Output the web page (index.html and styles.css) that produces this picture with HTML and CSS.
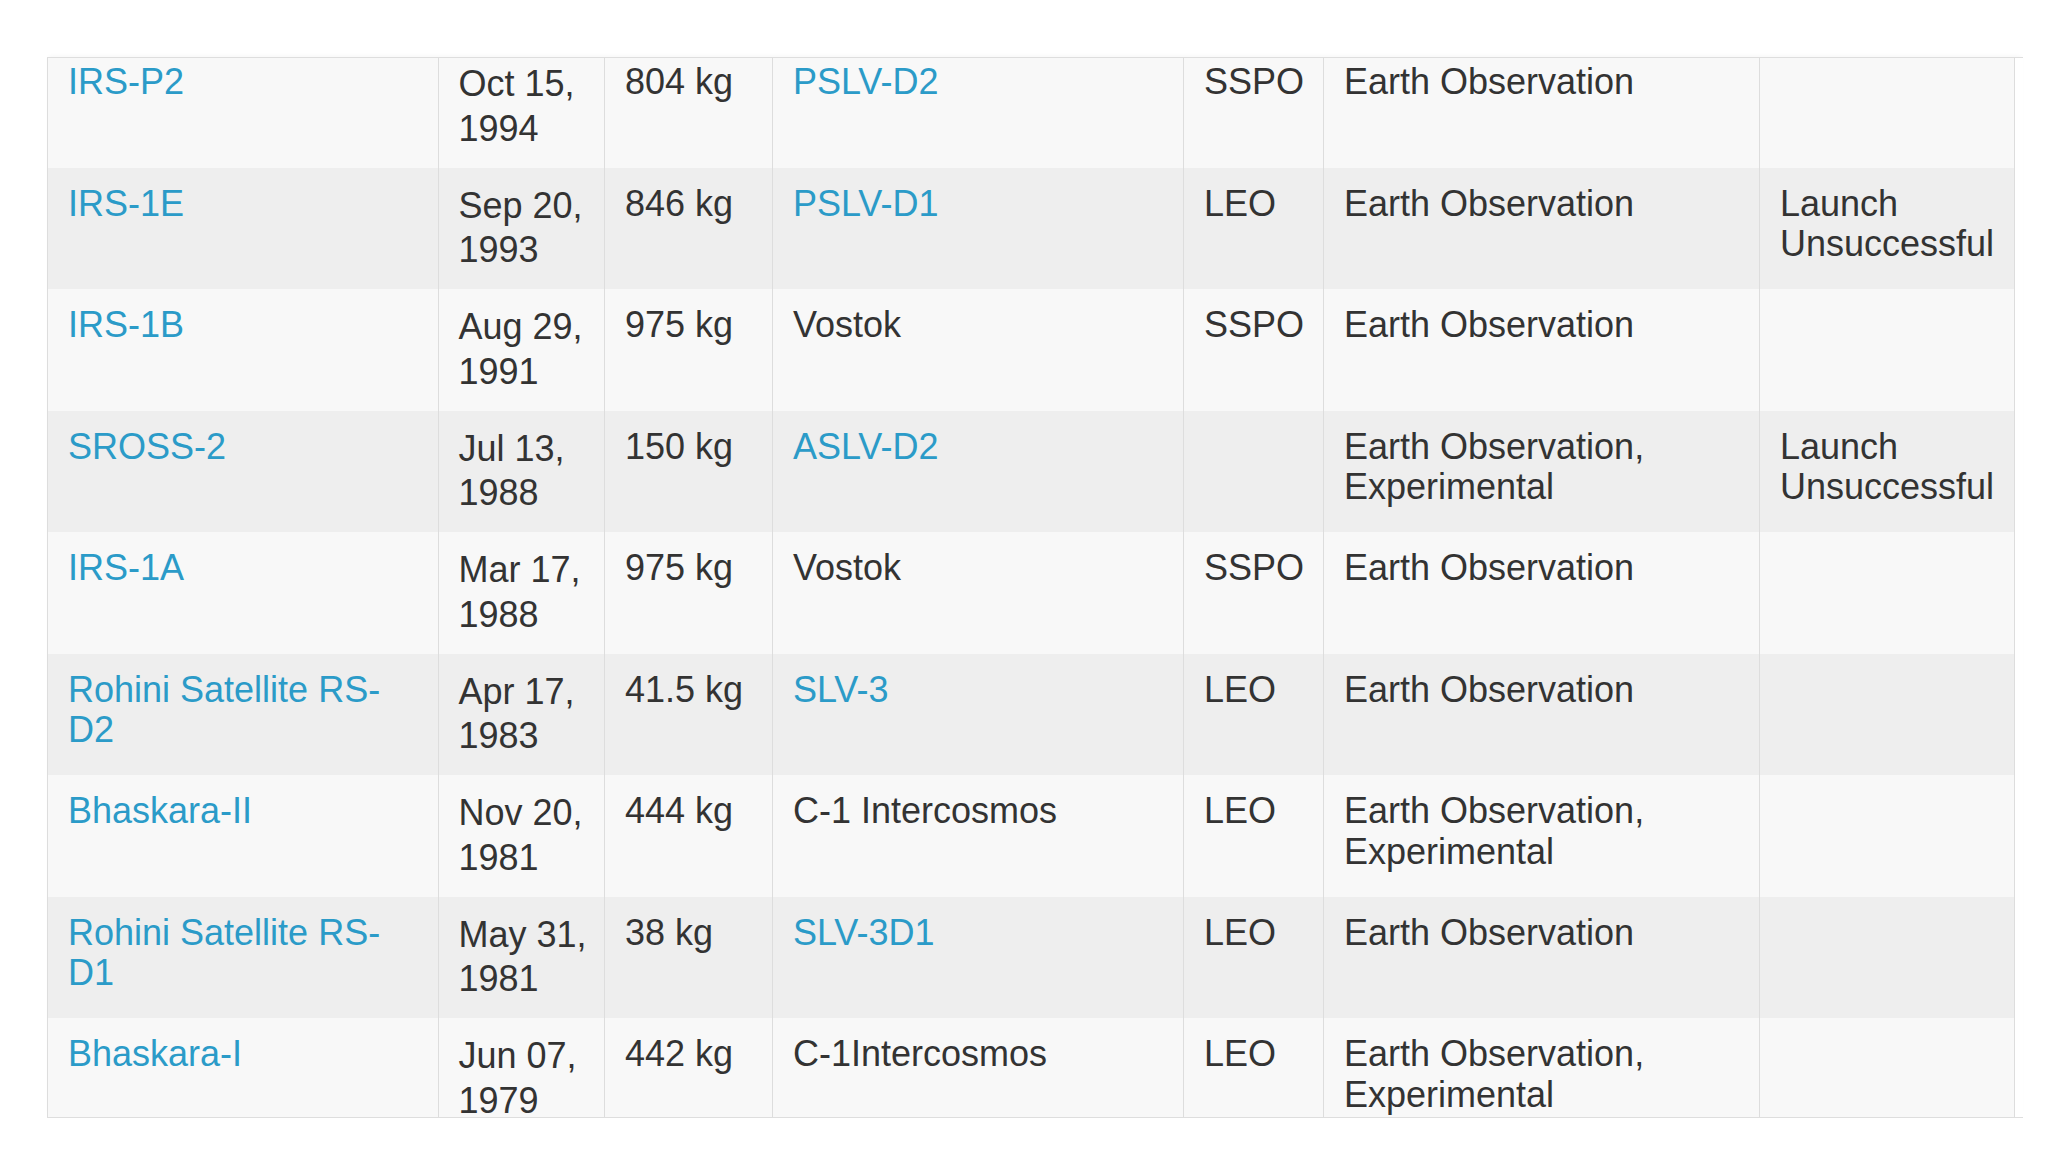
FILE: index.html
```html
<!DOCTYPE html>
<html lang="en">
<head>
<meta charset="utf-8">
<title>Satellites</title>
<link rel="stylesheet" href="styles.css">
</head>
<body>
<div class="page">
  <div class="scroller">
    <table class="sat">
      <colgroup>
        <col class="c-name">
        <col class="c-date">
        <col class="c-mass">
        <col class="c-veh">
        <col class="c-orbit">
        <col class="c-app">
        <col class="c-rem">
      </colgroup>
      <tbody>
        <tr>
          <td><a href="#">IRS-P2</a></td>
          <td class="date">Oct 15, 1994</td>
          <td>804 kg</td>
          <td><a href="#">PSLV-D2</a></td>
          <td>SSPO</td>
          <td>Earth Observation</td>
          <td></td>
        </tr>
        <tr>
          <td><a href="#">IRS-1E</a></td>
          <td class="date">Sep 20, 1993</td>
          <td>846 kg</td>
          <td><a href="#">PSLV-D1</a></td>
          <td>LEO</td>
          <td>Earth Observation</td>
          <td>Launch Unsuccessful</td>
        </tr>
        <tr>
          <td><a href="#">IRS-1B</a></td>
          <td class="date">Aug 29, 1991</td>
          <td>975 kg</td>
          <td>Vostok</td>
          <td>SSPO</td>
          <td>Earth Observation</td>
          <td></td>
        </tr>
        <tr>
          <td><a href="#">SROSS-2</a></td>
          <td class="date">Jul 13, 1988</td>
          <td>150 kg</td>
          <td><a href="#">ASLV-D2</a></td>
          <td></td>
          <td>Earth Observation, Experimental</td>
          <td>Launch Unsuccessful</td>
        </tr>
        <tr>
          <td><a href="#">IRS-1A</a></td>
          <td class="date">Mar 17, 1988</td>
          <td>975 kg</td>
          <td>Vostok</td>
          <td>SSPO</td>
          <td>Earth Observation</td>
          <td></td>
        </tr>
        <tr>
          <td><a href="#">Rohini Satellite RS-D2</a></td>
          <td class="date">Apr 17, 1983</td>
          <td>41.5 kg</td>
          <td><a href="#">SLV-3</a></td>
          <td>LEO</td>
          <td>Earth Observation</td>
          <td></td>
        </tr>
        <tr>
          <td><a href="#">Bhaskara-II</a></td>
          <td class="date">Nov 20, 1981</td>
          <td>444 kg</td>
          <td>C-1 Intercosmos</td>
          <td>LEO</td>
          <td>Earth Observation, Experimental</td>
          <td></td>
        </tr>
        <tr>
          <td><a href="#">Rohini Satellite RS-D1</a></td>
          <td class="date">May 31, 1981</td>
          <td>38 kg</td>
          <td><a href="#">SLV-3D1</a></td>
          <td>LEO</td>
          <td>Earth Observation</td>
          <td></td>
        </tr>
        <tr>
          <td><a href="#">Bhaskara-I</a></td>
          <td class="date">Jun 07, 1979</td>
          <td>442 kg</td>
          <td>C-1Intercosmos</td>
          <td>LEO</td>
          <td>Earth Observation, Experimental</td>
          <td></td>
        </tr>
      </tbody>
    </table>
  </div>
</div>
</body>
</html>
```

FILE: styles.css
```css
html, body {
  margin: 0;
  padding: 0;
  background: #ffffff;
}

body {
  font-family: "Liberation Sans", Arial, sans-serif;
  color: #333333;
}

.page {
  padding: 57px 0 0 47px;
}

.scroller {
  width: 1976px;
  height: 1059px;
  overflow: hidden;
  border-top: 1px solid #dedede;
  border-bottom: 1px solid #dedede;
  box-shadow: 0 -3px 4px -2px rgba(0, 0, 0, 0.04);
}

.sat {
  margin-top: -12px;
  width: 1967px;
  border-collapse: collapse;
  table-layout: fixed;
  font-size: 36px;
  line-height: 40.5px;
}

.c-name { width: 390.5px; }
.c-date { width: 166.5px; }
.c-mass { width: 168px; }
.c-veh { width: 411px; }
.c-orbit { width: 140px; }
.c-app { width: 436px; }
.c-rem { width: 255px; }

.sat td {
  vertical-align: top;
  padding: 16px 12px 16px 20px;
  border-left: 1px solid #dddddd;
  border-right: 1px solid #dddddd;
}

.sat td.date {
  line-height: 44.75px;
}

.sat tr:nth-child(odd) td {
  background: #f8f8f8;
}

.sat tr:nth-child(even) td {
  background: #eeeeee;
}

.sat a {
  color: #2b9bc8;
  text-decoration: none;
}
```
